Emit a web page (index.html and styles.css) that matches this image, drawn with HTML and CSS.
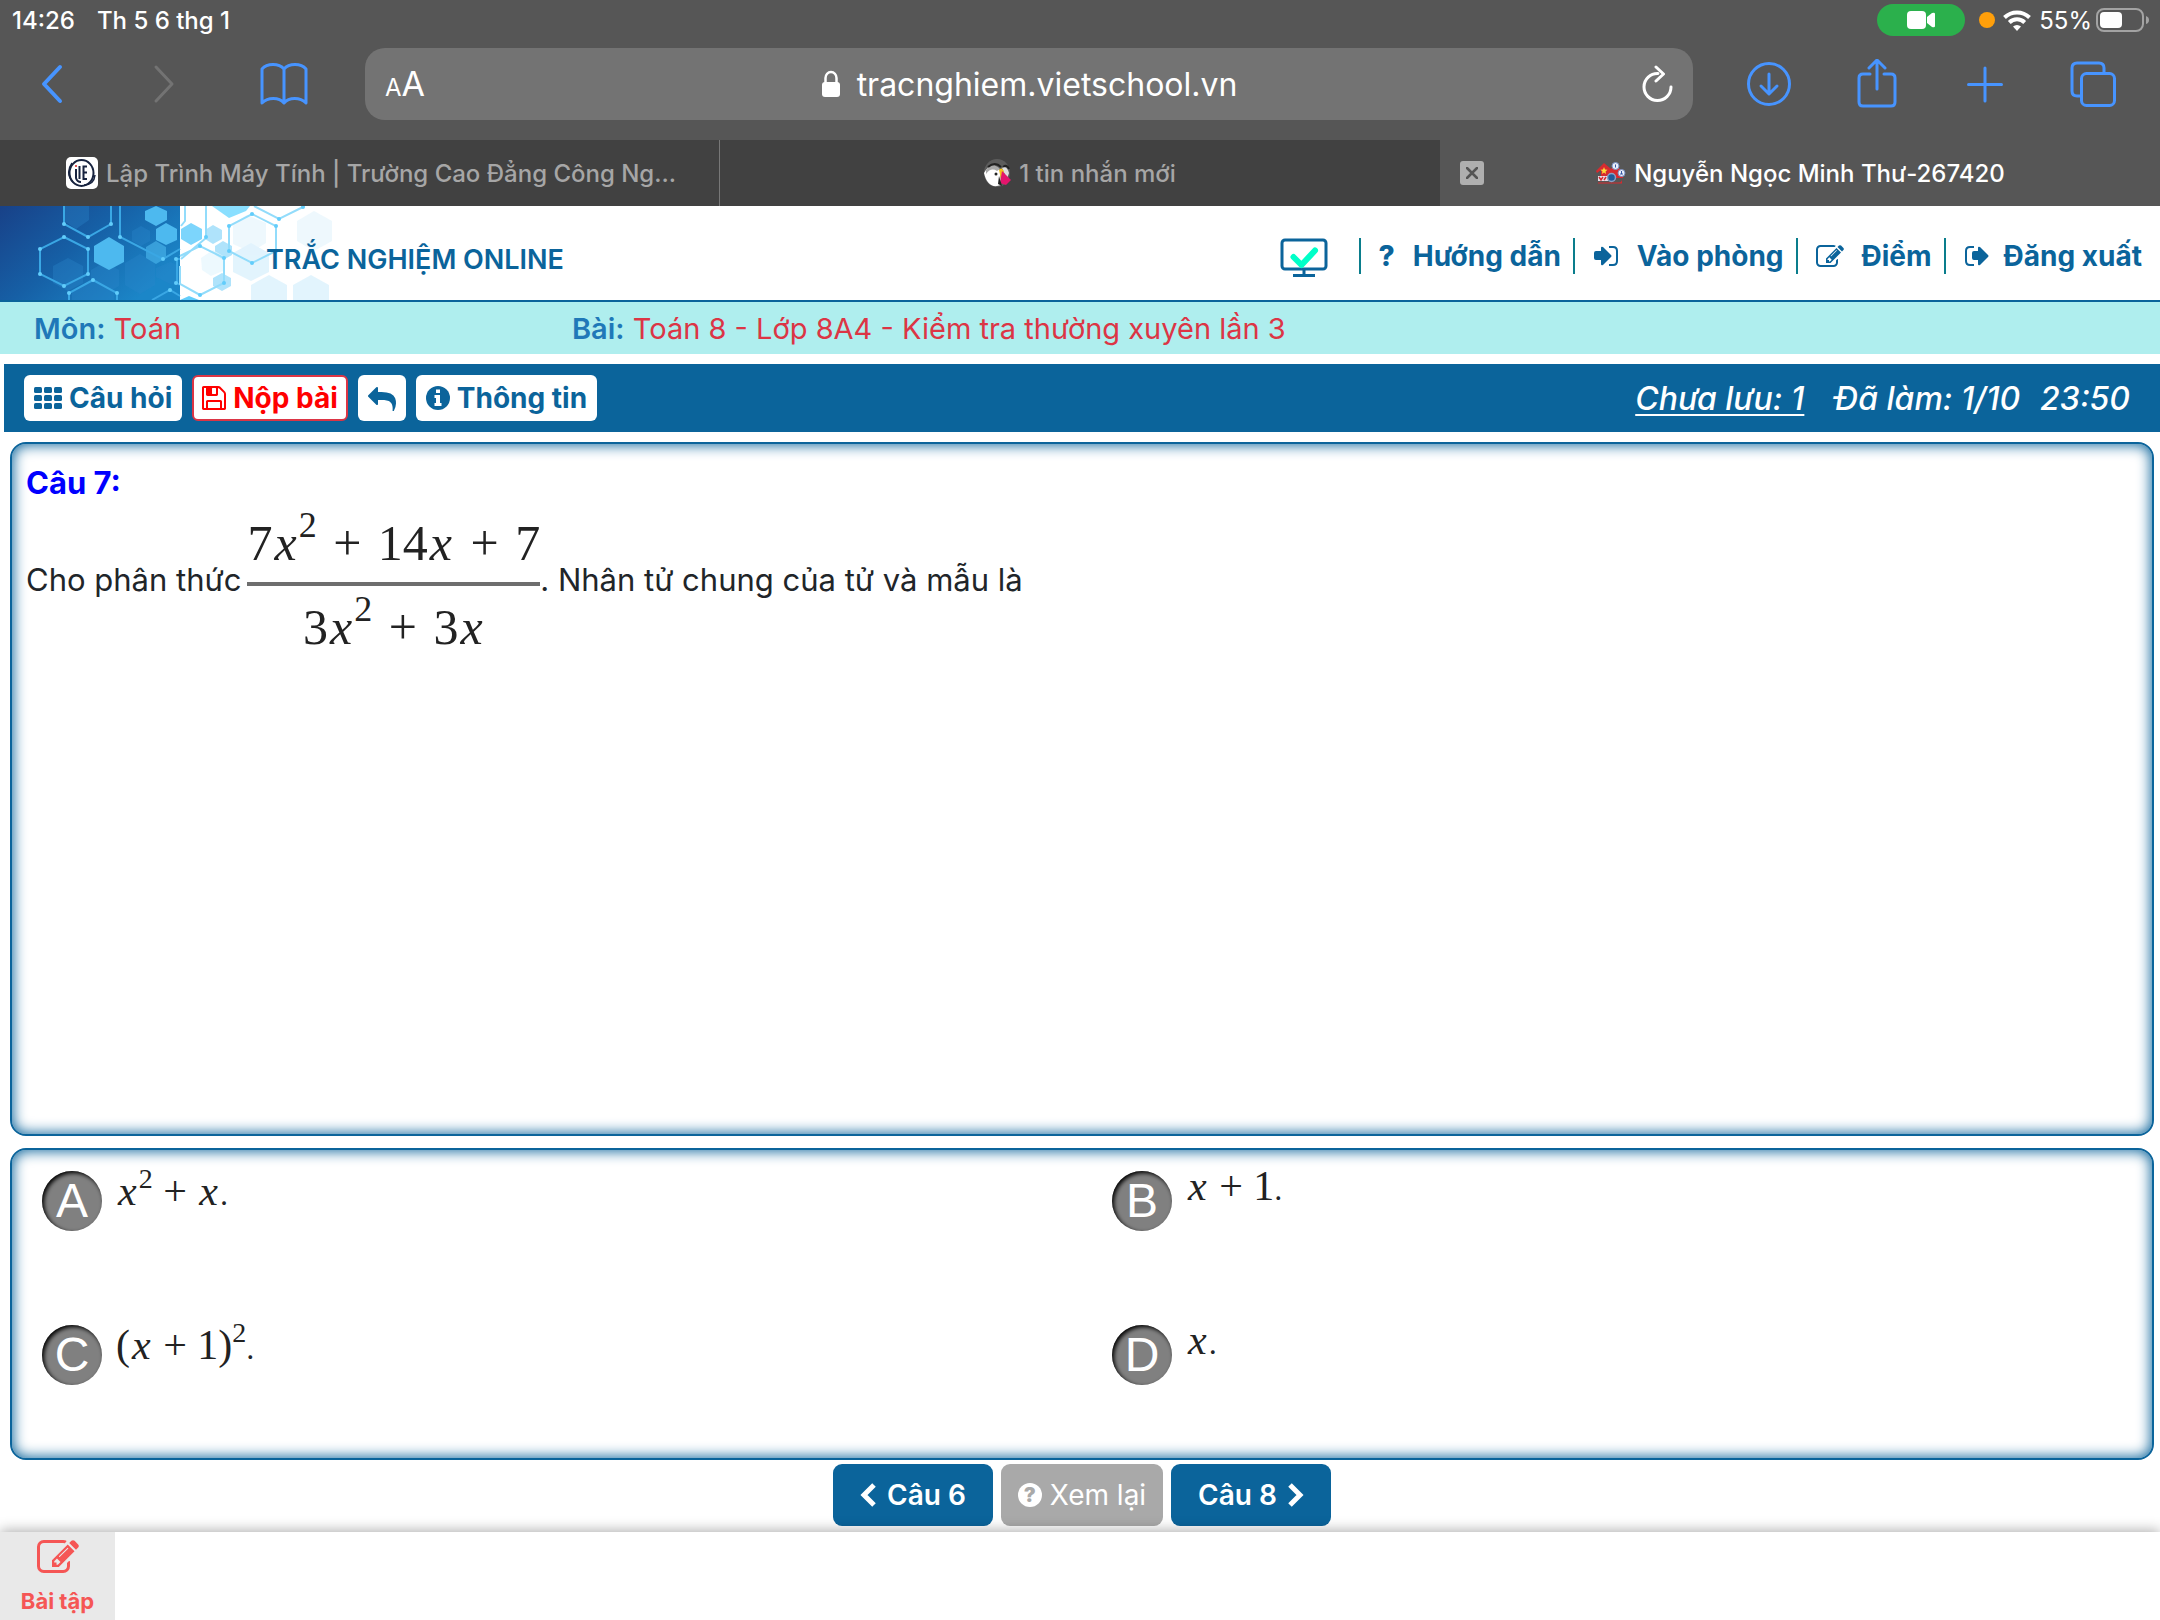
FILE: index.html
```html
<!DOCTYPE html>
<html lang="vi">
<head>
<meta charset="utf-8">
<meta name="viewport" content="width=device-width, initial-scale=1">
<title>Nguyễn Ngọc Minh Thư-267420</title>
<link rel="stylesheet" href="styles.css">
</head>
<body>
<svg class="defs" width="0" height="0" aria-hidden="true">
  <symbol id="edit" viewBox="0 128 1792 1408"><path fill="currentColor" d="M888 1184l116-116-152-152-116 116v56h96v96h56zm440-720q-16-16-33 1l-350 350q-17 17-1 33t33-1l350-350q17-17 1-33zm80 594v190q0 119-84.500 203.500t-203.500 84.500h-832q-119 0-203.500-84.500t-84.500-203.500v-832q0-119 84.500-203.500t203.500-84.500h832q63 0 117 25 15 7 18 23 3 17-9 29l-49 49q-14 14-32 8-23-6-45-6h-832q-66 0-113 47t-47 113v832q0 66 47 113t113 47h832q66 0 113-47t47-113v-126q0-13 9-22l64-64q15-15 35-7t20 29zm-96-738l288 288-672 672h-288v-288zm444 132l-92 92-288-288 92-92q28-28 68-28t68 28l152 152q28 28 28 68t-28 68z"/></symbol>
</svg>

<div class="chrome">
  <div class="status">
    <span>14:26</span><span class="date">Th 5 6 thg 1</span>
    <span class="camera"><svg width="28" height="18" viewBox="0 0 28 18"><rect width="19" height="18" rx="4" fill="#fff"/><path d="M20 6l5-4q3-1 3 1v12q0 2-3 1l-5-4z" fill="#fff"/></svg></span>
    <span class="dot"></span>
    <svg class="wifi" width="28" height="21" viewBox="0 0 28 21"><g fill="none" stroke="#fff" stroke-width="4"><path d="M1.500 7.500a18 18 0 0 1 25 0"/><path d="M6.300 12.500a11 11 0 0 1 15.400 0"/></g><path d="M14 21l-4-4.500a6 6 0 0 1 8 0z" fill="#fff"/></svg>
    <span class="percent">55%</span>
    <svg width="54" height="24" viewBox="0 0 54 24"><rect x="1" y="1" width="46" height="22" rx="7" fill="none" stroke="#a3a3a3" stroke-width="2"/><rect x="4" y="4" width="22" height="16" rx="4" fill="#fff"/><path d="M50 8q3 1 3 4t-3 4z" fill="#a3a3a3"/></svg>
  </div>

  <div class="toolbar">
    <button class="tool back" aria-label="Quay lại"><svg width="24" height="40" viewBox="0 0 24 40"><path d="M20 3L4 20l16 17" fill="none" stroke="currentColor" stroke-width="4" stroke-linecap="round" stroke-linejoin="round"/></svg></button>
    <button class="tool forward" aria-label="Tiếp"><svg width="24" height="40" viewBox="0 0 24 40"><path d="M4 3l16 17L4 37" fill="none" stroke="currentColor" stroke-width="3" stroke-linecap="round" stroke-linejoin="round"/></svg></button>
    <button class="tool book" aria-label="Dấu trang"><svg width="50" height="44" viewBox="0 0 50 44"><path d="M25 7C20 1 8 1 3 7v34c6-6 17-6 22 0 5-6 16-6 22 0V7C42 1 30 1 25 7zv34" fill="none" stroke="currentColor" stroke-width="3" stroke-linejoin="round"/></svg></button>
    <div class="address">
      <button class="aa" aria-label="Cỡ chữ"><small>A</small>A</button>
      <div class="url"><svg width="20" height="28" viewBox="0 0 20 28"><rect x="1" y="12" width="18" height="15" rx="3" fill="#fff"/><path d="M4.500 13V8a5.500 6 0 0 1 11 0v5" fill="none" stroke="#fff" stroke-width="2.500"/></svg><span>tracnghiem.vietschool.vn</span></div>
      <button class="reload" aria-label="Tải lại"><svg width="32" height="38" viewBox="0 0 32 38"><path d="M17 8.500a13.500 13.500 0 1 0 13 13.500M15 2l7.500 7L15 16" fill="none" stroke="#fff" stroke-width="3" stroke-linecap="round" stroke-linejoin="round"/></svg></button>
    </div>
    <div class="actions">
      <button class="tool" aria-label="Tải về"><svg width="46" height="50" viewBox="0 0 46 50"><g fill="none" stroke="currentColor" stroke-width="3" stroke-linecap="round" stroke-linejoin="round"><circle cx="23" cy="25" r="20.500"/><path d="M23 15v19M15 27l8 8 8-8"/></g></svg></button>
      <button class="tool" aria-label="Chia sẻ"><svg width="46" height="50" viewBox="0 0 46 50"><g fill="none" stroke="currentColor" stroke-width="3" stroke-linecap="round" stroke-linejoin="round"><path d="M16 15H9q-4 0-4 4v24q0 4 4 4h28q4 0 4-4V19q0-4-4-4h-7M23 30V2M15 9l8-8 8 8"/></g></svg></button>
      <button class="tool" aria-label="Tab mới"><svg width="46" height="50" viewBox="0 0 46 50"><path d="M23 9v33M6.500 25.500h33" stroke="currentColor" stroke-width="3" stroke-linecap="round"/></svg></button>
      <button class="tool" aria-label="Các tab"><svg width="46" height="50" viewBox="0 0 46 50"><g fill="none" stroke="currentColor" stroke-width="3"><rect x="11.500" y="14.500" width="33" height="32" rx="5"/><path d="M11 37H7q-5 0-5-5V9q0-5 5-5h22q5 0 5 5v5"/></g></svg></button>
    </div>
  </div>

  <nav class="tabs">
    <a class="tab first" href="#"><svg width="32" height="32" viewBox="0 0 32 32"><rect width="32" height="32" rx="5" fill="#fff"/><g fill="none" stroke="#17233f"><ellipse cx="15.500" cy="16" rx="12" ry="13" stroke-width="2"/><path d="M6 6Q-1 16 7 25" stroke-width="1.500"/><path d="M29 18Q28 28 18 28" stroke-width="1.500"/><path d="M10 12v9q1 4 5 4M13.500 9v13M21 9.500h-3.500V22H21M17.500 15.500H21" stroke-width="2"/></g><circle cx="10" cy="9" r="1" fill="#d22"/></svg><span>Lập Trình Máy Tính | Trường Cao Đẳng Công Ng...</span></a>
    <a class="tab" href="#"><svg width="27" height="28" viewBox="0 0 27 28"><ellipse cx="13" cy="14" rx="13" ry="14" fill="#5c5c5c"/><path d="M0 14Q6 2 16 11l1 15Q4 31 0 14z" fill="#fff"/><path d="M2 11Q8 2 16 10l-3 2Q7 8 2 15z" fill="#a9a9a9"/><path d="M4 8Q11 2 17 8M19 8q4-3 6 2" stroke="#222" stroke-width="2" fill="none"/><path d="M18 9q5-3 7 5l-2 6z" fill="#ddd"/><path d="M15 11q3-4 5 2l-3 7z" fill="#f4c21d"/><path d="M18 12l9 9-5 5-6-2z" fill="#e4156c"/><path d="M15 17l3 10-4-2z" fill="#222"/><circle cx="12" cy="15" r="1.500" fill="#222"/></svg><span>1 tin nhắn mới</span></a>
    <div class="tab active">
      <button class="close" aria-label="Đóng tab"><svg width="12" height="12" viewBox="0 0 12 12"><path d="M1 1l10 10M11 1L1 11" stroke="#555" stroke-width="2.500" stroke-linecap="round"/></svg></button>
      <a class="tab-label" href="#"><svg width="31" height="24" viewBox="0 0 31 24"><path d="M1 10L9 2l7 6 3-6 9 9v6H6V9l-4 3z" fill="#d62a2f"/><path d="M6 9h14v6H6z" fill="#d62a2f"/><path d="M9 6l1 2.500 2.500.2-2 1.800.6 2.500L9 11.600 6.800 13l.7-2.500-2-1.800L8 8.500z" fill="#ffd93a"/><path d="M3 15h10v5H3z" fill="#e9dfe9"/><path d="M4 16l2 3 2-3M11 16l-2 3" stroke="#d62a2f" fill="none" stroke-width="1.500"/><path d="M3 21.500h21q3 0 3-4v5H3z" fill="#d62a2f"/><circle cx="16.500" cy="16.500" r="4" fill="#1f5c9a" stroke="#8ba2c4" stroke-width="1.500"/><circle cx="20.500" cy="5" r="3.500" fill="#e8eefa" stroke="#7790c4"/><circle cx="26.500" cy="12" r="3.500" fill="#e8eefa" stroke="#7790c4"/><path d="M20.500 3.500v3M26.500 10v3M25 13h3" stroke="#3557a5"/></svg><span>Nguyễn Ngọc Minh Thư-267420</span></a>
    </div>
  </nav>
</div>

<header class="site">
  <div class="brand">
    <svg class="banner" width="350" height="94" viewBox="0 0 350 94" aria-hidden="true">
      <defs><linearGradient id="sea" x1="0" y1="0" x2="1" y2="0.600"><stop offset="0" stop-color="#184188"/><stop offset="0.500" stop-color="#1660a6"/><stop offset="1" stop-color="#1b86c8"/></linearGradient></defs>
      <rect width="180" height="94" fill="url(#sea)"/>
      <g fill="#2a86cc" opacity="0.350"><path d="M64 0h25v14L76 23 64 15zM140 48l15 9v22l-15 9-15-9V57zM105 56l14 8v16l-14 8-14-8V64zM68 52l15 8v17l-15 8-15-8V60zM170 56l10 4v20l-10-2-14-7v-9zM92 74l22 12v8H72v-8zM141 20l9 5v10l-9 5-9-5V25z"/></g>
      <g fill="#4db9ef"><path d="M156 0l11 5v9l-11 6-11-6V5zM166 17l11 6v11l-11 5-10-5V23zM109 31l15 9v16l-15 8-15-8V40z"/><path d="M156 35l10 6v11l-10 6-10-6V41z" opacity="0.600"/></g>
      <g fill="none" stroke="#3aa7e4" stroke-width="2"><path d="M64 0v18l24 13 23-13V0M64 31l24 12v25L64 80 40 68V43zM120 0v31l43 22 17-10M69 94v-7l24-13 24 13v7M152 94l18-10 10 6M180 53h-3v24l3 2"/></g>
      <g fill="#62cdfb"><circle cx="64" cy="18" r="2"/><circle cx="88" cy="31" r="2"/><circle cx="111" cy="18" r="2"/><circle cx="64" cy="31" r="2"/><circle cx="88" cy="43" r="2"/><circle cx="88" cy="68" r="2"/><circle cx="64" cy="80" r="2"/><circle cx="40" cy="68" r="2"/><circle cx="40" cy="43" r="2"/><circle cx="120" cy="31" r="2"/><circle cx="163" cy="53" r="2"/><circle cx="69" cy="87" r="2"/><circle cx="93" cy="74" r="2"/><circle cx="117" cy="87" r="2"/><circle cx="170" cy="84" r="2"/><circle cx="176" cy="53" r="2"/><circle cx="176" cy="77" r="2"/></g>
      <g fill="#d3eefc" opacity="0.650"><path d="M314 5l18 10v20l-18 10-17-10V15z" opacity="0.600"/><path d="M251 37l18 10v19l-18 9-18-9V47zM269 69l18 10v15h-36V79zM311 69l18 10v15h-36V79z"/><path d="M247 9l19 8v20l-15 9-18-8V18z" opacity="0.600"/></g>
      <path d="M212 0h38l-4 5-17 7z" fill="#8adfff"/>
      <path d="M191 17l11 6v10l-11 6-10-6V23z" fill="#7cd5fc"/>
      <g fill="#8dd7f9"><path d="M213 19l9 5v9l-9 5-8-5v-9zM223 35l9 5v9l-9 5-8-5v-9zM222 67l9 5v8l-9 5-9-5v-8z" opacity="0.700"/></g>
      <path d="M201 52l12-8 10 6v15l-12 5-9-6z" fill="#e5f6fd" opacity="0.700"/>
      <g fill="none" stroke="#92dcfb" stroke-width="2"><path d="M180 60v18l20 11 24-12V52l-24-12-20 10M181 20l4-5V0M206 31V0M181 53l25-21M252 8l24 12v25l-24 12-23-12V20zM254 0l25 13 24-12"/></g>
      <path d="M180 94l9-4 10 4z" fill="#62cdfb"/>
      <g fill="#62cdfb"><circle cx="200" cy="40" r="2"/><circle cx="224" cy="52" r="2"/><circle cx="224" cy="77" r="2"/><circle cx="200" cy="89" r="2"/><circle cx="206" cy="31" r="2"/><circle cx="252" cy="8" r="2"/><circle cx="276" cy="20" r="2"/><circle cx="276" cy="45" r="2"/><circle cx="252" cy="57" r="2"/><circle cx="229" cy="20" r="2"/><circle cx="229" cy="45" r="2"/><circle cx="279" cy="13" r="2"/><circle cx="303" cy="1" r="2"/></g>
    </svg>
    <h1>TRẮC NGHIỆM ONLINE</h1>
  </div>
  <nav class="menu">
    <a class="screen" href="#" aria-label="Màn hình"><svg width="48" height="40" viewBox="0 0 48 40"><rect x="2" y="2" width="44" height="29" rx="3" fill="none" stroke="#0b649b" stroke-width="3"/><path d="M24 31v6M13 37.500h22" stroke="#0b649b" stroke-width="3"/><path d="M13.500 19l8 8L35 12.500" fill="none" stroke="#00ffc8" stroke-width="6" stroke-linejoin="round" stroke-linecap="round"/></svg></a>
    <a href="#"><b class="mark">?</b>Hướng dẫn</a>
    <a href="#"><svg width="26" height="22" viewBox="0 0 26 22"><path d="M1 8q0-2 2-2h5V3q0-2 2-1l8 8q1 1 0 2l-8 8q-2 1-2-1v-4H3q-2 0-2-2z" fill="currentColor"/><path d="M16 2h4q4 0 4 4v10q0 4-4 4h-4" fill="none" stroke="currentColor" stroke-width="2"/></svg>Vào phòng</a>
    <a href="#"><svg width="28" height="22"><use href="#edit"/></svg>Điểm</a>
    <a class="exit" href="#"><svg width="26" height="22" viewBox="0 0 26 22"><path d="M8 8q0-2 2-2h4V3q0-2 2-1l8 8q1 1 0 2l-8 8q-2 1-2-1v-4h-4q-2 0-2-2z" fill="currentColor"/><path d="M10 2H6Q2 2 2 6v10q0 4 4 4h4" fill="none" stroke="currentColor" stroke-width="2"/></svg>Đăng xuất</a>
  </nav>
</header>

<div class="subject">
  <p><b>Môn:</b> <span>Toán</span></p>
  <p><b>Bài:</b> <span>Toán 8 - Lớp 8A4 - Kiểm tra thường xuyên lần 3</span></p>
</div>

<div class="exam-bar">
  <button><svg width="28" height="22" viewBox="0 0 28 22" fill="currentColor"><rect width="8" height="6" rx="1.500"/><rect x="10" width="8" height="6" rx="1.500"/><rect x="20" width="8" height="6" rx="1.500"/><rect y="8" width="8" height="6" rx="1.500"/><rect x="10" y="8" width="8" height="6" rx="1.500"/><rect x="20" y="8" width="8" height="6" rx="1.500"/><rect y="16" width="8" height="6" rx="1.500"/><rect x="10" y="16" width="8" height="6" rx="1.500"/><rect x="20" y="16" width="8" height="6" rx="1.500"/></svg>Câu hỏi</button>
  <button class="submit"><svg width="24" height="24" viewBox="128 128 1536 1536"><path fill="currentColor" d="M512 1536h768v-384h-768v384zm896 0h128v-896q0-14-10-38.500t-20-34.500l-281-281q-10-10-34-20t-39-10v416q0 40-28 68t-68 28h-576q-40 0-68-28t-28-68v-416h-128v1280h128v-416q0-40 28-68t68-28h832q40 0 68 28t28 68v416zm-384-928v-320q0-13-9.500-22.500t-22.500-9.500h-192q-13 0-22.500 9.500t-9.500 22.500v320q0 13 9.500 22.500t22.500 9.500h192q13 0 22.500-9.500t9.500-22.500zm640 32v928q0 40-28 68t-68 28h-1344q-40 0-68-28t-28-68v-1344q0-40 28-68t68-28h928q40 0 88 20t76 48l280 280q28 28 48 76t20 88z"/></svg>Nộp bài</button>
  <button aria-label="Trở lại"><svg width="28" height="25" viewBox="0 0 1792 1600"><path fill="currentColor" transform="translate(1792 0) scale(-1 1)" d="M1792 640q0 26-19 45l-512 512q-19 19-45 19t-45-19-19-45v-256h-224q-98 0-175.500 6t-154 21.500-133 42.500-105.500 69.500-80 101-48.500 138.500-17.500 181q0 55 5 123 0 6 2.500 23.500t2.500 26.500q0 15-8.500 25t-23.500 10q-16 0-28-17-7-9-13-22t-13.500-30-10.500-24q-127-285-127-451 0-199 53-333 162-403 875-403h224v-256q0-26 19-45t45-19 45 19l512 512q19 19 19 45z"/></svg></button>
  <button><svg width="24" height="24" viewBox="0 0 24 24"><circle cx="12" cy="12" r="12" fill="currentColor"/><path d="M10 3.500h4v3.500h-4zM8.500 9H14v8h1.500v3h-7v-3H10v-5H8.500z" fill="#fff"/></svg>Thông tin</button>
  <p class="progress"><a href="#">Chưa lưu: 1</a><span class="done">Đã làm: 1/10</span><time>23:50</time></p>
</div>

<main>
  <section class="panel question">
    <h2>Câu 7:</h2>
    <p class="prompt"><span class="words">Cho phân thức</span><span class="fraction math"><span class="term">7<i>x</i><sup>2</sup> <span class="op">+</span> 14<i>x</i> <span class="op">+</span> 7</span><span class="term under">3<i>x</i><sup>2</sup> <span class="op">+</span> 3<i>x</i></span></span><span class="words">. Nhân tử chung của tử và mẫu là</span></p>
  </section>
  <section class="panel answers">
    <div class="answer"><button>A</button><p><span class="math term"><i>x</i><sup>2</sup> <span class="op">+</span> <i>x</i></span>.</p></div>
    <div class="answer"><button>B</button><p><span class="math term"><i>x</i> <span class="op">+</span> 1</span>.</p></div>
    <div class="answer"><button>C</button><p><span class="math term">(<i>x</i> <span class="op">+</span> 1)<sup>2</sup></span>.</p></div>
    <div class="answer"><button>D</button><p><span class="math term"><i>x</i></span>.</p></div>
  </section>
</main>

<div class="pager">
  <button><svg width="17" height="26" viewBox="0 0 17 26"><path d="M14 3L4 13l10 10" fill="none" stroke="currentColor" stroke-width="5"/></svg>Câu 6</button>
  <button class="review"><b class="help">?</b>Xem lại</button>
  <button>Câu 8<svg width="17" height="26" viewBox="0 0 17 26"><path d="M3 3l10 10L3 23" fill="none" stroke="currentColor" stroke-width="5"/></svg></button>
</div>

<footer class="dock">
  <a href="#"><svg width="42" height="33"><use href="#edit"/></svg>Bài tập</a>
</footer>
</body>
</html>
```

FILE: styles.css
```css
:root {
  --blue: #0b649b;
  --ios: #4794ff;
  --chrome: #565656;
}

* { box-sizing: border-box; }

body {
  margin: 0;
  min-height: 100vh;
  display: flex;
  flex-direction: column;
  background: #fff;
  color: #212529;
  font-family: Inter, "Liberation Sans", sans-serif;
  font-size: 28px;
}

p, h1, h2 { margin: 0; }
a { color: inherit; text-decoration: none; }
button {
  font: inherit;
  color: inherit;
  border: 0;
  padding: 0;
  background: none;
}
svg { display: block; flex: none; }
.defs { position: absolute; }

/* browser chrome */
.chrome { background: var(--chrome); color: #fff; }
.status {
  display: flex;
  align-items: center;
  height: 40px;
  padding: 0 10px 0 12px;
  font-size: 24px;
  font-weight: 500;
}
.date { margin: 0 auto 0 22px; }
.camera {
  display: flex;
  align-items: center;
  justify-content: center;
  width: 88px;
  height: 32px;
  border-radius: 16px;
  background: #2bb04c;
}
.dot {
  width: 16px;
  height: 16px;
  margin: 0 8px 0 14px;
  border-radius: 50%;
  background: #ff9f0a;
}
.percent { margin: 0 4px 0 8px; font-weight: 400; }

.toolbar {
  display: flex;
  align-items: center;
  height: 100px;
  padding: 0 44px 12px 40px;
}
.tool { color: var(--ios); }
.forward { margin-left: 88px; color: #737373; }
.book { margin: 0 56px 0 83px; }
.address {
  flex: 1;
  display: grid;
  grid-template-columns: 1fr auto 1fr;
  align-items: center;
  height: 72px;
  padding: 0 20px;
  border-radius: 20px;
  background: #737373;
}
.aa { justify-self: start; padding-top: 4px; font-size: 34px; line-height: 40px; }
.aa small { font-size: 24px; }
.url { display: flex; align-items: center; gap: 16px; font-size: 32px; }
.reload { justify-self: end; }
.actions { display: flex; gap: 62px; margin-left: 53px; }

.tabs { display: grid; grid-template-columns: repeat(3, 1fr); height: 66px; }
.tab {
  display: flex;
  align-items: center;
  justify-content: center;
  gap: 8px;
  min-width: 0;
  font-size: 24px;
  font-weight: 500;
  white-space: nowrap;
  color: #a6a6a6;
  background: #414141;
}
.tab.first { justify-content: flex-start; padding-left: 66px; border-right: 1px solid #777; }
.tab.active {
  display: grid;
  grid-template-columns: 1fr auto 1fr;
  padding: 0 20px;
  color: #fff;
  background: var(--chrome);
}
.tab-label { display: flex; align-items: center; gap: 8px; }
.close {
  display: flex;
  align-items: center;
  justify-content: center;
  width: 24px;
  height: 24px;
  border-radius: 3px;
  background: #afafaf;
}

/* site header */
.site {
  display: flex;
  justify-content: space-between;
  height: 96px;
  border-bottom: 2px solid var(--blue);
  color: var(--blue);
}
.brand { display: grid; align-items: center; }
.banner, .brand h1 { grid-area: 1 / 1; }
.brand h1 { padding: 14px 0 0 266px; font-size: 27px; font-weight: 600; line-height: 32px; }
.menu { display: flex; align-items: center; padding: 6px 18px 0 0; font-weight: 700; }
.menu a {
  display: flex;
  align-items: center;
  gap: 18px;
  height: 36px;
  padding: 0 12px 0 18px;
  border-right: 2px solid #0a7d8c;
}
.menu .screen { padding: 4px 31px 0 0; }
.menu .exit { gap: 14px; padding: 0 0 0 18px; border: 0; }
.mark { font-weight: 800; }

.subject {
  display: grid;
  grid-template-columns: 538px 1fr;
  align-items: center;
  height: 52px;
  padding: 0 34px;
  background: #afeeee;
  font-size: 29px;
}
.subject b { font-weight: 600; color: #1f78b8; }
.subject span { color: #dc3545; }

.exam-bar {
  display: flex;
  align-items: center;
  gap: 10px;
  height: 68px;
  margin: 10px 0 0 4px;
  padding: 0 30px 0 20px;
  background: var(--blue);
}
.exam-bar button {
  display: flex;
  align-items: center;
  gap: 7px;
  height: 46px;
  padding: 0 10px;
  border-radius: 6px;
  background: #fff;
  color: var(--blue);
  font-weight: 700;
}
.exam-bar .submit { padding: 0 8px; border: 2px solid #dc3545; color: #f00; }
.progress {
  display: flex;
  margin-left: auto;
  color: #fff;
  font-size: 32px;
  font-weight: 500;
  font-style: italic;
}
.progress a { text-decoration: underline; text-underline-offset: 4px; text-decoration-thickness: 2px; }
.done { margin: 0 20px 0 30px; }

/* question */
main {
  flex: 1;
  display: flex;
  flex-direction: column;
  gap: 12px;
  padding: 10px 6px 0 10px;
}
.panel {
  border: 2px solid var(--blue);
  border-radius: 16px;
  box-shadow: inset 0 0 14px 1px var(--blue);
}
.question { flex: 1; padding: 20px 14px; font-size: 31px; }
.question h2 { font-size: 31px; line-height: 38px; font-weight: 700; color: #00f; }
.prompt { display: flex; align-items: center; }
.words { padding-bottom: 10px; }
.math {
  font-family: "Liberation Serif", serif;
  color: #222;
}
.math i { margin: 0 2px; }
.term { line-height: 1; white-space: nowrap; }
.fraction {
  display: flex;
  flex-direction: column;
  align-items: center;
  margin-left: 6px;
  font-size: 50px;
}
.fraction .term { padding: 16px 0 14px; }
.fraction .under { width: 100%; border-top: 4px solid #6e6e6e; text-align: center; }
.fraction sup { font-size: 36px; line-height: 0; vertical-align: 23px; }
.fraction .op { margin: 0 4px; }

.answers {
  display: grid;
  grid-template-columns: 1fr 1fr;
  grid-auto-rows: 154px;
  height: 312px;
}
.answer { display: flex; align-items: flex-start; padding: 15px 0 0 30px; gap: 14px; }
.answer button {
  width: 60px;
  height: 60px;
  margin-top: 6px;
  border-radius: 50%;
  background: #808080;
  box-shadow: inset 2px 2px 4px #000;
  color: #fff;
  font: 48px/60px "Liberation Sans", Arial, sans-serif;
}
.answer .term { font-size: 42px; }
.answer sup { font-size: 28px; line-height: 28px; vertical-align: 17px; }

.pager { display: flex; justify-content: center; gap: 8px; padding: 4px 0 6px 4px; }
.pager button {
  display: flex;
  align-items: center;
  justify-content: center;
  gap: 10px;
  width: 160px;
  height: 62px;
  border-radius: 9px;
  background: var(--blue);
  color: #fff;
  font-weight: 600;
}
.pager .review { gap: 8px; width: 162px; background: #a9a9a9; font-weight: 400; }
.help {
  width: 24px;
  height: 24px;
  border-radius: 50%;
  background: #fff;
  color: #a9a9a9;
  font-size: 20px;
  font-weight: 900;
  line-height: 24px;
}

.dock { height: 88px; background: #fff; box-shadow: 0 -2px 12px rgba(0, 0, 0, 0.3); }
.dock a {
  display: flex;
  flex-direction: column;
  align-items: center;
  justify-content: space-between;
  width: 115px;
  height: 88px;
  padding: 8px 0 6px;
  background: #e9e9e9;
  color: #f55655;
  font-size: 22px;
  font-weight: 700;
  line-height: 26px;
}
```
